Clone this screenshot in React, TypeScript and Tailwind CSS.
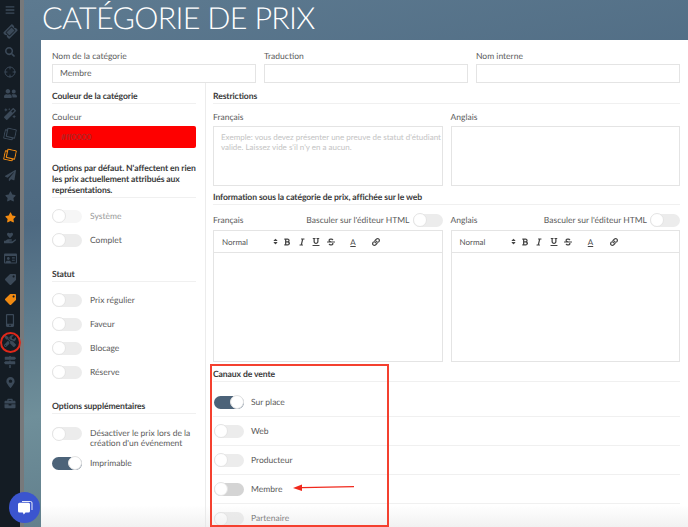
import {
  FaBars, FaTicketAlt, FaSearch, FaUserFriends, FaMagic, FaRegClone, FaPaperPlane, FaStar,
  FaHandHoldingHeart, FaRegIdCard, FaTag, FaMobileAlt, FaTools, FaMapSigns, FaMapMarkerAlt, FaBriefcase,
  FaBold, FaItalic, FaUnderline, FaStrikethrough, FaLink, FaSort,
} from "react-icons/fa";
import { LuCrosshair } from "react-icons/lu";

const D = "text-[#3b4958]";
const O = "text-[#f08a12]";

function Toggle({ on = false, dim = false, dark = false }: { on?: boolean; dim?: boolean; dark?: boolean }) {
  return (
    <span
      className={`relative inline-block h-[13px] w-[30px] shrink-0 rounded-full ${
        on ? "bg-[#4c6379]" : dark ? "bg-[#d4d4d4]" : dim ? "bg-[#f6f6f6]" : "bg-[#ececec]"
      }`}
    >
      <span
        className={`absolute top-[-0.5px] h-[14px] w-[14px] rounded-full border border-[#e4e4e4] bg-white ${
          on ? "right-0" : "left-0"
        }`}
      />
    </span>
  );
}

function Section({ children, className = "" }: { children: React.ReactNode; className?: string }) {
  return (
    <div className={`border-b border-[#f0f0f0] pb-[1px] text-[8.6px] leading-[11px] font-bold tracking-[-0.1px] text-[#3a3a3a] ${className}`}>
      {children}
    </div>
  );
}

function ToggleRow({ label, on, dim }: { label: string; on?: boolean; dim?: boolean }) {
  return (
    <div className="flex h-[24px] items-center gap-[8px]">
      <Toggle on={on} dim={dim} />
      <span className={`text-[8.5px] ${dim ? "text-[#999]" : "text-[#5a5a5a]"}`}>{label}</span>
    </div>
  );
}

function Field({ label }: { label: string }) {
  return <div className="h-[11px] text-[8.5px] leading-[11px] text-[#5a5a5a]">{label}</div>;
}

function Editor() {
  return (
    <div className="flex h-[132px] flex-col border border-[#e4e4e4]">
      <div className="flex h-[22px] items-center border-b border-[#e4e4e4] pl-[8px] text-[#444]">
        <span className="w-[50px] text-[8px] text-[#555]">Normal</span>
        <FaSort className="h-[7px] w-[7px]" />
        <div className="ml-[1px] flex w-[14px] justify-center"><FaBold className="h-[8px] w-[8px]" /></div>
        <div className="flex w-[15px] justify-center"><FaItalic className="h-[8px] w-[8px]" /></div>
        <div className="flex w-[14px] justify-center"><FaUnderline className="h-[8px] w-[8px]" /></div>
        <div className="flex w-[15px] justify-center"><FaStrikethrough className="h-[8px] w-[8px]" /></div>
        <div className="ml-[8px] flex w-[14px] flex-col items-center text-[8px] leading-[8px] underline">A</div>
        <div className="ml-[9px] flex w-[14px] justify-center"><FaLink className="h-[8px] w-[8px]" /></div>
      </div>
    </div>
  );
}

function Channel({ label, on, dark, last }: { label: string; on?: boolean; dark?: boolean; last?: boolean }) {
  return (
    <div className={`flex h-[29px] shrink-0 items-center gap-[7px] pl-px ${last ? "" : "border-b border-[#f0f0f0]"}`}>
      <Toggle on={on} dark={dark} />
      <span className="text-[8.5px] text-[#5a5a5a]">{label}</span>
    </div>
  );
}

const icons = [
  <FaBars className={`h-[10px] w-[10px] ${D}`} />,
  <FaTicketAlt className={`h-[13px] w-[13px] -rotate-45 ${D}`} />,
  <FaSearch className={`h-[10px] w-[10px] ${D}`} />,
  <LuCrosshair className={`h-[12px] w-[12px] ${D}`} />,
  <FaUserFriends className={`h-[13px] w-[13px] ${D}`} />,
  <FaMagic className={`h-[12px] w-[12px] ${D}`} />,
  <FaRegClone className={`h-[12px] w-[12px] rotate-12 ${D}`} />,
  <FaRegClone className={`h-[12px] w-[12px] rotate-12 ${O}`} />,
  <FaPaperPlane className={`h-[11px] w-[11px] ${D}`} />,
  <FaStar className={`h-[11px] w-[11px] ${D}`} />,
  <FaStar className={`h-[11px] w-[11px] ${O}`} />,
  <FaHandHoldingHeart className={`h-[12px] w-[12px] ${D}`} />,
  <FaRegIdCard className={`h-[13px] w-[13px] ${D}`} />,
  <FaTag className={`h-[11px] w-[11px] rotate-90 ${D}`} />,
  <FaTag className={`h-[11px] w-[11px] rotate-90 ${O}`} />,
  <FaMobileAlt className={`h-[13px] w-[12px] ${D}`} />,
  <FaTools className={`h-[12px] w-[12px] ${D}`} />,
  <FaMapSigns className={`h-[12px] w-[12px] ${D}`} />,
  <FaMapMarkerAlt className={`h-[11px] w-[11px] ${D}`} />,
  <FaBriefcase className={`h-[11px] w-[12px] ${D}`} />,
];

export default function App() {
  return (
    <div className="relative flex h-[527px] w-[688px] overflow-hidden bg-white font-['Lato',sans-serif] [text-rendering:geometricPrecision]">
      <aside className="flex w-[20px] shrink-0 flex-col items-center bg-[#141c24]">
        {icons.map((ic, i) => (
          <div key={i} className="flex h-[20.7px] w-full shrink-0 items-center justify-center">{ic}</div>
        ))}
      </aside>
      <div className="w-[4px] shrink-0 bg-[#77797b]" />
      <div className="flex min-w-0 flex-1 flex-col bg-[linear-gradient(170deg,#5d7a90_0%,#4e6a82_35%,#6f8f9a_65%,#55707f_100%)]">
        <h1 className="flex h-[40px] shrink-0 items-center pb-[4px] pl-[18px] text-[30.5px] leading-none font-light tracking-[-0.7px] text-white">
          CATÉGORIE DE PRIX
        </h1>
        <main className="ml-[17px] flex min-h-0 flex-1 flex-col bg-white pl-[11px] pr-[8px] pt-[11px]">
          <div className="grid grid-cols-3 gap-[8px]">
            {[["Nom de la catégorie", "Membre"], ["Traduction", ""], ["Nom interne", ""]].map(([l, v]) => (
              <div key={l}>
                <div className="mb-[3px] h-[10px] text-[8.5px] leading-[10px] text-[#5a5a5a]">{l}</div>
                <div className="flex h-[19px] items-center border border-[#e4e4e4] pl-[7px] text-[8.5px] text-[#5a5a5a]">{v}</div>
              </div>
            ))}
          </div>
          <div className="flex min-h-0 flex-1">
            <div className="w-[154px] shrink-0 border-r border-[#ececec] pr-[9px] pt-[8px]">
              <Section>Couleur de la catégorie</Section>
              <div className="mt-[8px]"><Field label="Couleur" /></div>
              <div className="mt-[3px] flex h-[22px] items-center rounded-[2px] bg-[#fe0000] pl-[9px] text-[8.5px] text-[#a02c2c]">#ff0000</div>
              <Section className="mt-[15px]">Options par défaut. N'affectent en rien les prix actuellement attribués aux représentations.</Section>
              <div className="mt-[6px]">
                <ToggleRow label="Système" dim />
                <ToggleRow label="Complet" />
              </div>
              <Section className="mt-[17px]">Statut</Section>
              <div className="mt-[6px]">
                <ToggleRow label="Prix régulier" />
                <ToggleRow label="Faveur" />
                <ToggleRow label="Blocage" />
                <ToggleRow label="Réserve" />
              </div>
              <Section className="mt-[17px]">Options supplémentaires</Section>
              <div className="mt-[14px] flex items-start gap-[8px]">
                <div className="-mt-[1px] flex"><Toggle /></div>
                <span className="text-[8.5px] leading-[10px] text-[#5a5a5a]">Désactiver le prix lors de la<br />création d'un événement</span>
              </div>
              <div className="mt-[3px]"><ToggleRow label="Imprimable" on /></div>
            </div>
            <div className="flex min-w-0 flex-1 flex-col pl-[7px] pt-[8px]">
              <Section>Restrictions</Section>
              <div className="mt-[8px] grid grid-cols-2 gap-[8px]">
                <div>
                  <Field label="Français" />
                  <div className="mt-[3px] h-[60px] whitespace-nowrap border border-[#e4e4e4] px-[7px] pt-[5px] text-[8px] leading-[10px] text-[#c4c4c4]">
                    Exemple: vous devez présenter une preuve de statut d'étudiant<br />valide. Laissez vide s'il n'y en a aucun.
                  </div>
                </div>
                <div>
                  <Field label="Anglais" />
                  <div className="mt-[3px] h-[60px] border border-[#e4e4e4]" />
                </div>
              </div>
              <Section className="mt-[6px]">Information sous la catégorie de prix, affichée sur le web</Section>
              <div className="mt-[7px] grid grid-cols-2 gap-[8px]">
                {["Français", "Anglais"].map((l) => (
                  <div key={l}>
                    <div className="mb-[2px] flex h-[16px] items-center justify-between">
                      <span className="text-[8.5px] text-[#5a5a5a]">{l}</span>
                      <span className="flex items-center gap-[3px] text-[8.5px] text-[#5a5a5a]">
                        Basculer sur l'éditeur HTML <Toggle />
                      </span>
                    </div>
                    <Editor />
                  </div>
                ))}
              </div>
              <Section className="mt-[7px]">Canaux de vente</Section>
              <div className="flex min-h-0 flex-1 flex-col pt-[6px]">
                <Channel label="Sur place" on />
                <Channel label="Web" />
                <Channel label="Producteur" />
                <Channel label="Membre" dark />
                <Channel label="Partenaire" last />
              </div>
            </div>
          </div>
        </main>
      </div>

      {/* annotations */}
      <div className="pointer-events-none absolute bottom-0 left-[41px] h-[22px] w-[647px] bg-[linear-gradient(to_bottom,rgba(225,225,225,0),rgba(225,225,225,0.45))]" />
      <div className="pointer-events-none absolute left-[0px] top-[332px] h-[21px] w-[21px] rounded-full border-2 border-[#e0281a]" />
      <div className="pointer-events-none absolute left-[210px] top-[364px] h-[163px] w-[179px] border-2 border-[#f4402f]" />
      <svg className="pointer-events-none absolute left-[290px] top-[482px]" width="66" height="12" viewBox="0 0 66 12">
        <path d="M64 4.6 L12 5.6" stroke="#f0281c" strokeWidth="1.4" fill="none" />
        <path d="M3 6 L12 2.5 L12 9 Z" fill="#f0281c" />
      </svg>
      <div className="absolute left-[9px] top-[492px] flex h-[31px] w-[31px] items-center justify-center rounded-full bg-[#3b55cf]">
        <svg width="18" height="18" viewBox="0 0 18 18">
          <path d="M6 2.5 H14.5 a1.5 1.5 0 0 1 1.5 1.5 V11" fill="none" stroke="#fff" strokeWidth="0.9" />
          <path d="M3.5 3.8 H12.5 a1.5 1.5 0 0 1 1.5 1.5 V12 a1.5 1.5 0 0 1 -1.5 1.5 H9.5 L7.8 15.5 L6.8 13.5 H3.5 a1.5 1.5 0 0 1 -1.5 -1.5 V5.3 a1.5 1.5 0 0 1 1.5 -1.5 Z" fill="#fff" />
        </svg>
      </div>
    </div>
  );
}
